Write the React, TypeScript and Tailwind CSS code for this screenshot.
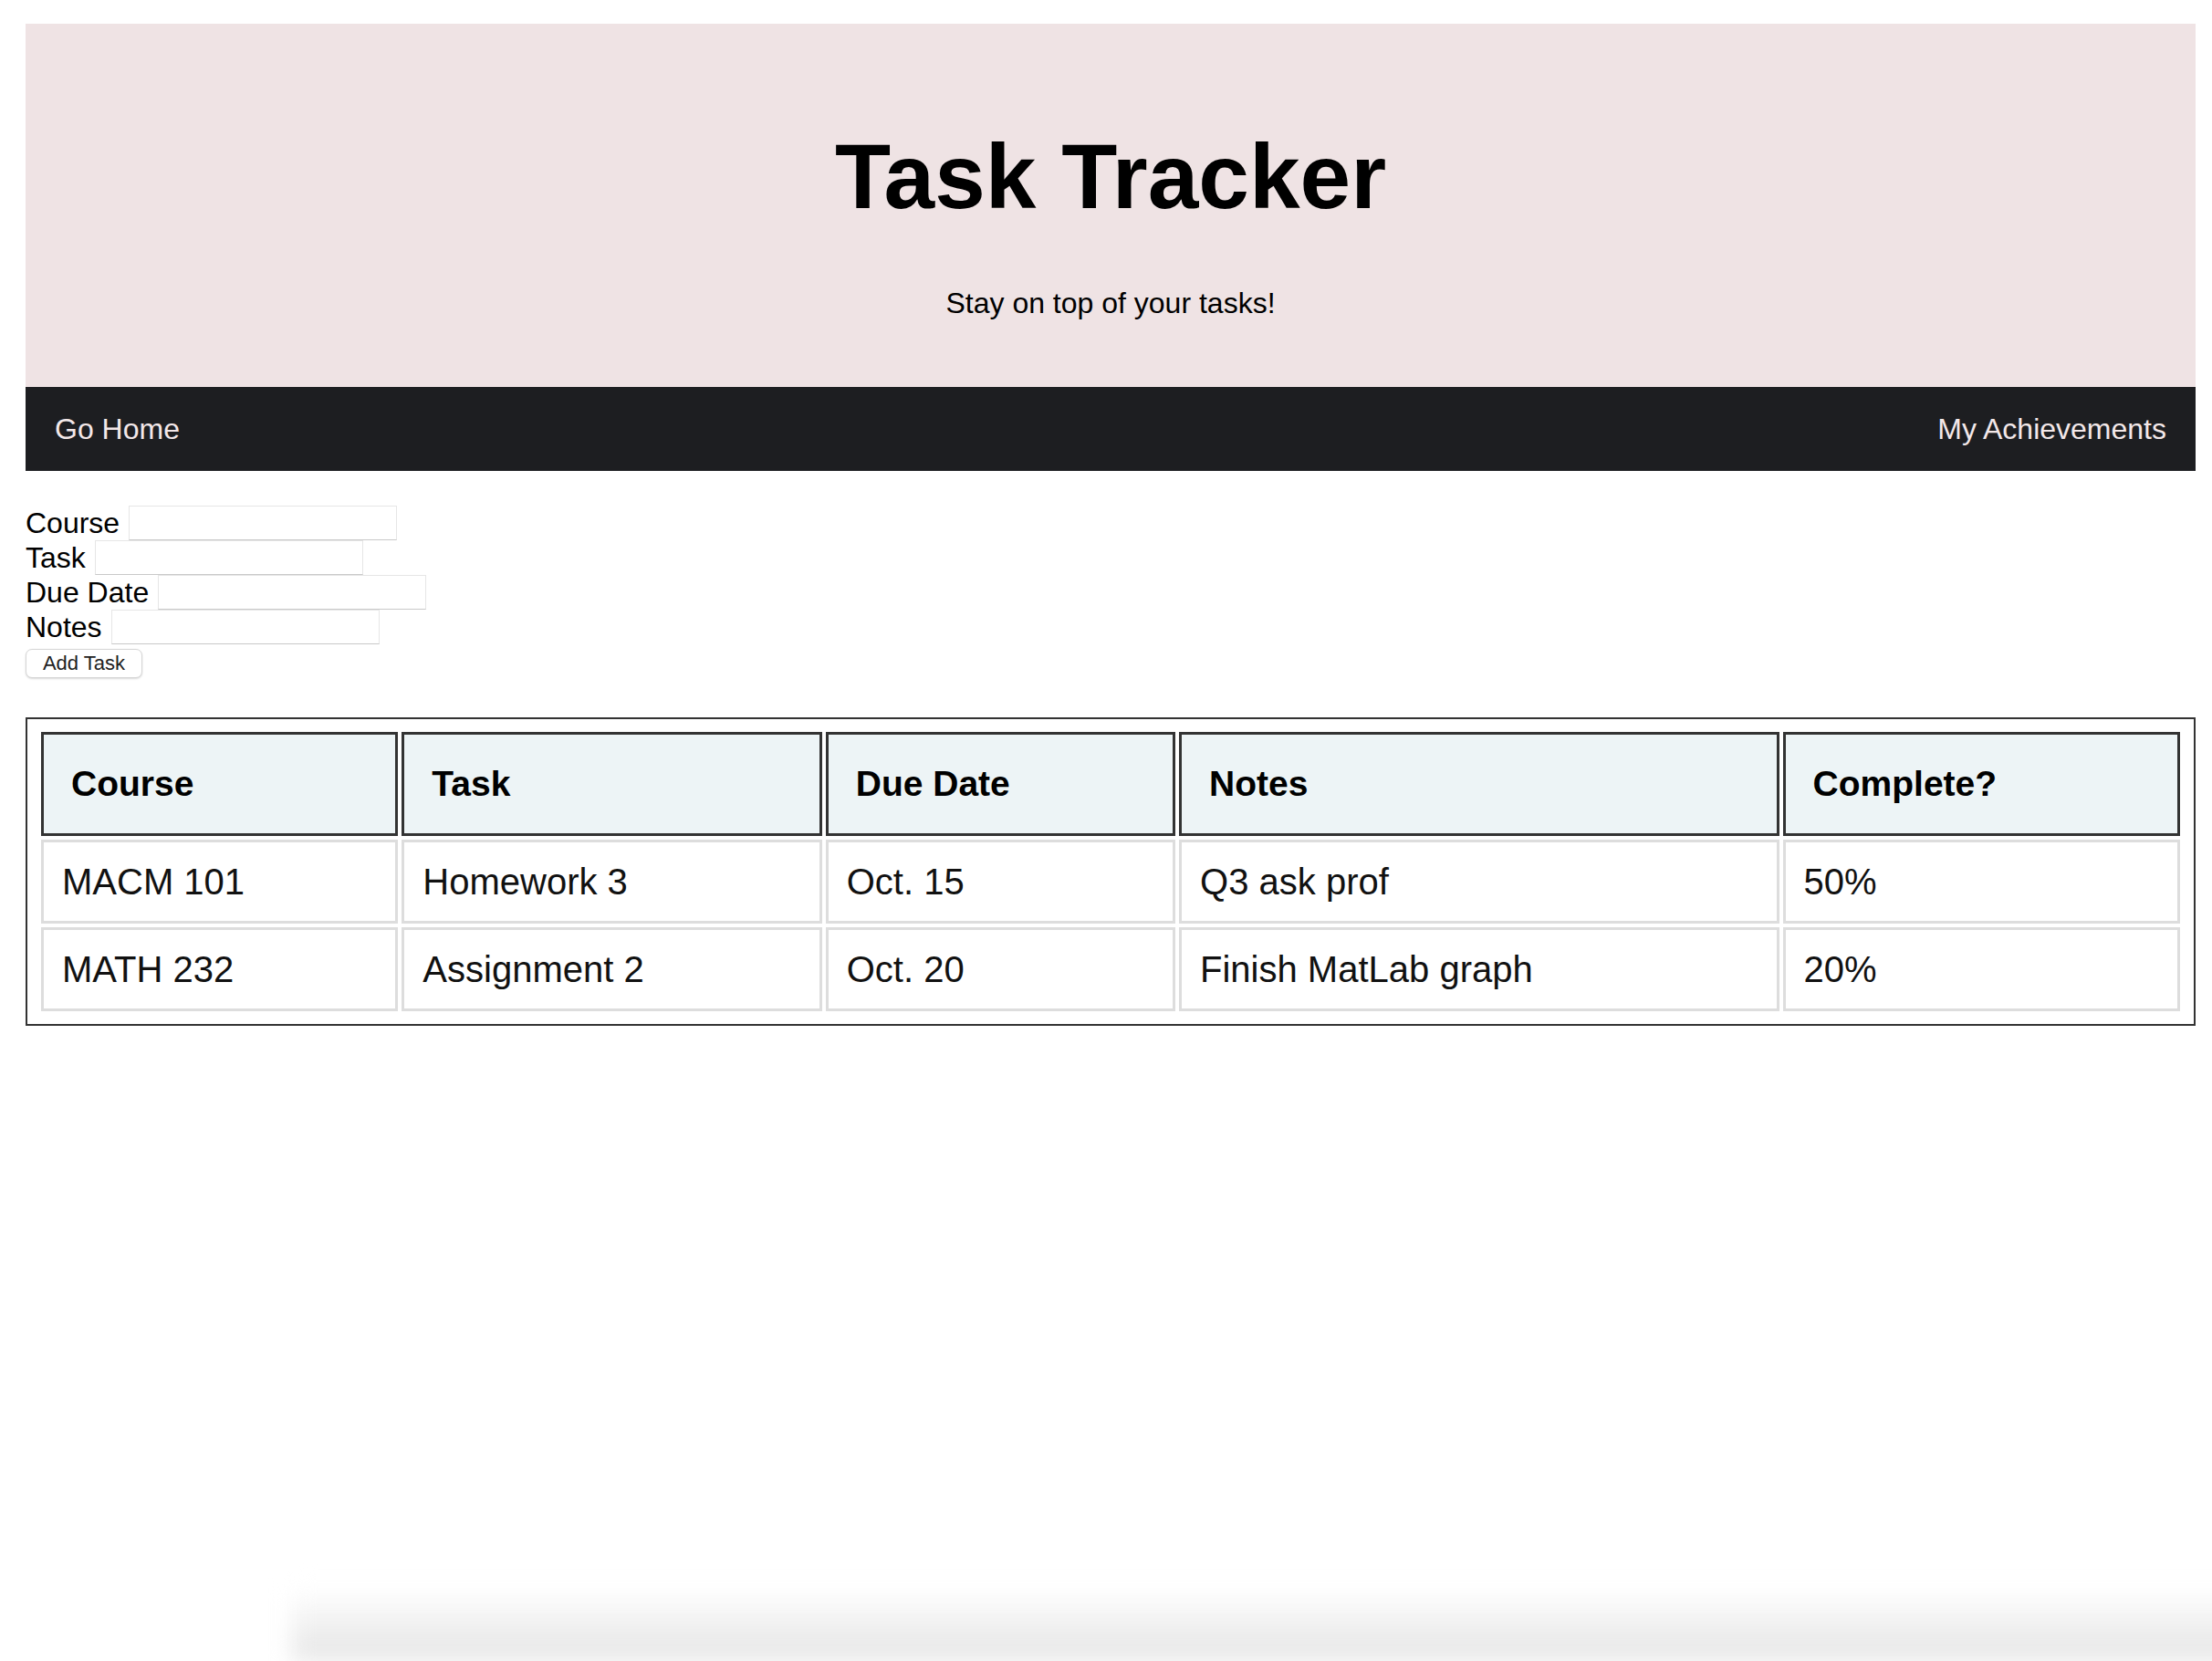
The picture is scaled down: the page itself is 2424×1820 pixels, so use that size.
import React from 'react';

const tasks = [
    { course: 'MACM 101', task: 'Homework 3', due: 'Oct. 15', notes: 'Q3 ask prof', complete: '50%' },
    { course: 'MATH 232', task: 'Assignment 2', due: 'Oct. 20', notes: 'Finish MatLab graph', complete: '20%' },
];

const fields = ['Course', 'Task', 'Due Date', 'Notes'];
const headers = ['Course', 'Task', 'Due Date', 'Notes', 'Complete?'];

export default function App() {
    return (
        <div className="h-[1820px] overflow-hidden bg-white flex flex-col font-['Liberation_Sans',Arial,sans-serif] text-black">
            <div className="pt-[26px] pl-[28px] pr-[18px]">
                {/* Header */}
                <header className="bg-[#efe3e4] flex flex-col items-center pt-[117px] pb-[76px]">
                    <h1 className="text-[100px] leading-[100px] font-bold">Task Tracker</h1>
                    <p className="mt-[73px] text-[32px] leading-[32px]">Stay on top of your tasks!</p>
                </header>

                {/* Nav */}
                <nav className="bg-[#1d1e21] h-[92px] flex items-center justify-between px-[32px] text-[32px] text-[#f3e8e9]">
                    <a href="#">Go Home</a>
                    <a href="#">My Achievements</a>
                </nav>

                {/* Form */}
                <form className="mt-[38px]" onSubmit={(e) => e.preventDefault()}>
                    {fields.map((f) => (
                        <div key={f} className="flex items-center h-[38px]">
                            <label className="text-[32px] leading-[38px]">{f}</label>
                            <input
                                type="text"
                                className="ml-[10px] w-[294px] h-[38px] bg-white border border-[#e6e6e6] border-b-[#c9c9c9] outline-none"
                            />
                        </div>
                    ))}
                    <button
                        type="submit"
                        className="mt-[5px] w-[128px] h-[32px] rounded-[7px] border border-[#d6d6d6] bg-white shadow-[0_1px_2px_rgba(0,0,0,0.15)] text-[22px] leading-[22px] text-[#222]"
                    >
                        Add Task
                    </button>
                </form>

                {/* Table */}
                <div className="mt-[43px] border-2 border-[#333] px-[11px] py-[10px]">
                    <table className="w-full border-separate border-spacing-[4px]">
                        <colgroup>
                            <col className="w-[391px]" />
                            <col className="w-[460px]" />
                            <col className="w-[383px]" />
                            <col className="w-[657px]" />
                            <col className="w-[435px]" />
                        </colgroup>
                        <thead>
                            <tr>
                                {headers.map((h) => (
                                    <th
                                        key={h}
                                        className="border-[3px] border-[#333] bg-[#edf4f6] text-left font-bold text-[39px] leading-[46px] py-[31px] pl-[30px]"
                                    >
                                        {h}
                                    </th>
                                ))}
                            </tr>
                        </thead>
                        <tbody>
                            {tasks.map((t) => (
                                <tr key={t.course}>
                                    {[t.course, t.task, t.due, t.notes, t.complete].map((v, i) => (
                                        <td
                                            key={i}
                                            className="border-[3px] border-[#dddddd] text-[40px] leading-[46px] py-[20px] pl-[20px] text-[#111]"
                                        >
                                            {v}
                                        </td>
                                    ))}
                                </tr>
                            ))}
                        </tbody>
                    </table>
                </div>
            </div>

            {/* window shadow at the bottom edge */}
            <div className="mt-auto ml-[320px] mr-[-40px] h-[80px] bg-linear-to-b from-white to-[#e4e4e4] blur-[12px]" />
        </div>
    );
}
